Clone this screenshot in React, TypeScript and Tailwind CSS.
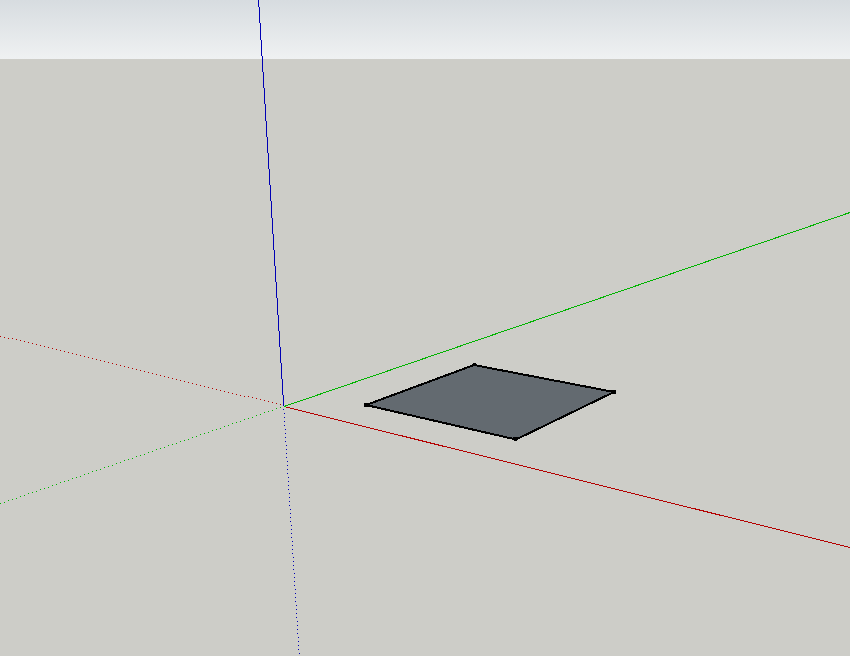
type Dot = { x: number; y: number };

const range = (from: number, to: number, step: number) =>
    Array.from({ length: Math.floor((to - from) / step) + 1 }, (_, i) => from + i * step);

// negative halves of the axes, one dot every four pixels
const redDots: Dot[] = range(0, 280, 4).map((x) => ({ x, y: Math.floor(336.04 + x * 0.2458) }));
const greenDots: Dot[] = range(0, 280, 4).map((x) => ({ x, y: Math.floor(503.5 - x * 0.343) }));
const blueDots: Dot[] = range(409, 653, 4).map((y) => ({ x: Math.floor(296 + (y - 605) / 16), y }));

function DottedAxis({ dots, className }: { dots: Dot[]; className: string }) {
    return (
        <g className={className}>
            {dots.map((dot) => (
                <rect key={`${dot.x}-${dot.y}`} x={dot.x} y={dot.y} width="1" height="1" />
            ))}
        </g>
    );
}

function Face() {
    return (
        <g>
            <polygon
                points="366,405 474,365 614,392 516,439.5"
                className="fill-[#636a70] stroke-black"
                strokeWidth="2"
                strokeLinejoin="round"
            />
            {/* endpoints */}
            <path d="M364 403h6v3h-1v1h-5z" />
            <path d="M473 363h3v1h1v2h-5v-2h1z" />
            <path d="M611 390h5v4h-4v-1h-1z" />
            <path d="M513 437h6v2h-1v1h-1v1h-3v-1h-1z" />
        </g>
    );
}

export default function App() {
    return (
        <main className="relative flex h-screen w-full flex-col overflow-hidden">
            <div className="h-[59px] shrink-0 bg-linear-to-b from-[#d7dce0] to-[#eff1f2]" />
            <div className="grow bg-[#cdcdc8]" />
            <svg
                className="absolute inset-0 h-full w-full"
                viewBox="0 0 850 656"
                preserveAspectRatio="xMinYMin slice"
                shapeRendering="crispEdges"
                role="img"
                aria-label="Model view"
            >
                <DottedAxis dots={redDots} className="fill-[#b40000]" />
                <DottedAxis dots={greenDots} className="fill-[#00b400]" />
                <DottedAxis dots={blueDots} className="fill-[#0000b4]" />
                <line x1="284" y1="406.5" x2="850" y2="547.5" className="stroke-[#b40000]" />
                <line x1="284" y1="406.5" x2="850" y2="212.5" className="stroke-[#00b400]" />
                <line x1="258.57" y1="0" x2="283.68" y2="406" className="stroke-[#0000b4]" />
                <Face />
            </svg>
        </main>
    );
}
